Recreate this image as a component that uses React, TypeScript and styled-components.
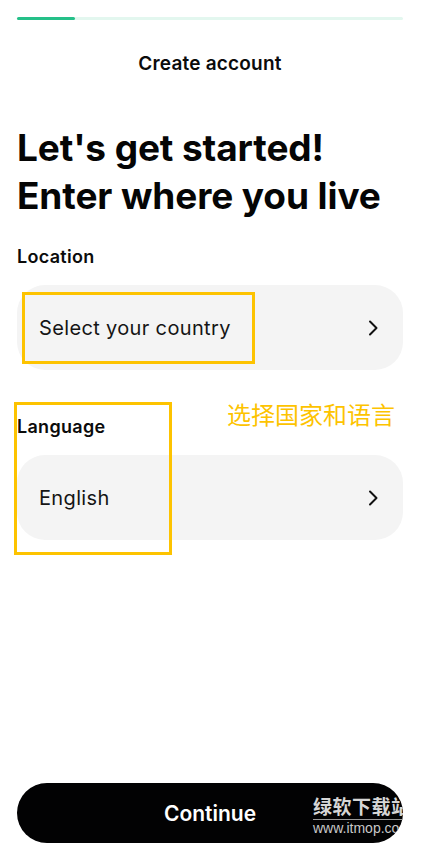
import React from "react";
import styled, { createGlobalStyle } from "styled-components";

const Global = createGlobalStyle`
  html, body { margin: 0; padding: 0; background: #ffffff; }
  body { font-family: Inter, "Noto Sans", "Liberation Sans", sans-serif; color: #0b0b0b; }
  * { box-sizing: border-box; }
`;

const Page = styled.div`
  min-height: 100vh;
  display: flex;
  flex-direction: column;
  padding: 17px 18px 11px 17px;
`;

const Progress = styled.div`
  height: 3px;
  border-radius: 2px;
  background: #e3f7ef;
  display: flex;
`;

const ProgressFill = styled.div`
  height: 100%;
  border-radius: 2px;
  background: #25c089;
`;

const TopTitle = styled.div`
  margin-top: 32px;
  text-align: center;
  font-size: 19px;
  line-height: 24px;
  font-weight: 600;
  letter-spacing: 0.2px;
`;

const Heading = styled.h1`
  margin: 48px 0 0;
  font-size: 37px;
  line-height: 48px;
  font-weight: 700;
  letter-spacing: -0.1px;
  color: #050505;
`;

const Section = styled.div<{ $gap: number }>`
  position: relative;
  margin-top: ${(p) => p.$gap}px;
  display: flex;
  flex-direction: column;
  gap: 16px;
`;

const Label = styled.div`
  font-size: 18px;
  line-height: 24px;
  font-weight: 600;
  letter-spacing: 0.3px;
`;

const Field = styled.button`
  position: relative;
  height: 85px;
  width: 100%;
  border: none;
  border-radius: 28px;
  background: #f4f4f4;
  display: flex;
  align-items: center;
  justify-content: space-between;
  padding: 0 24px 0 22px;
  font-family: inherit;
  font-size: 20px;
  letter-spacing: 0.35px;
  color: #151515;
  text-align: left;
`;

const Chevron = () => (
  <svg width="12" height="18" viewBox="0 0 12 18" fill="none">
    <path d="M3 2.5 L9.5 9 L3 15.5" stroke="#111" strokeWidth="2" strokeLinecap="round" strokeLinejoin="round" />
  </svg>
);

const Highlight = styled.div<{ $l: number; $t: number; $w: number; $h: number }>`
  position: absolute;
  left: ${(p) => p.$l}px;
  top: ${(p) => p.$t}px;
  width: ${(p) => p.$w}px;
  height: ${(p) => p.$h}px;
  border: 3px solid #fdc300;
  pointer-events: none;
`;

const Note = styled.div`
  position: absolute;
  left: 210px;
  top: -15px;
  font-family: "Noto Sans CJK SC", sans-serif;
  font-size: 24px;
  line-height: 28px;
  color: #fdc300;
`;

const Spacer = styled.div`
  flex: 1;
`;

const Continue = styled.button`
  position: relative;
  overflow: hidden;
  height: 60px;
  width: 100%;
  border: none;
  border-radius: 30px;
  background: #020203;
  color: #ffffff;
  font-family: inherit;
  font-size: 21px;
  font-weight: 600;
  display: flex;
  align-items: center;
  justify-content: center;
`;

const Watermark = styled.div`
  position: absolute;
  left: 296px;
  top: 12px;
  display: flex;
  flex-direction: column;
  color: #d6d6d6;
  white-space: nowrap;
  text-align: left;
`;

const WatermarkCn = styled.span`
  font-family: "Noto Sans CJK SC", sans-serif;
  font-size: 19px;
  line-height: 22px;
  font-weight: 700;
  letter-spacing: 0.5px;
  padding-bottom: 2px;
  border-bottom: 1px solid #9a9a9a;
`;

const WatermarkUrl = styled.span`
  font-family: "Liberation Sans", sans-serif;
  font-size: 14px;
  line-height: 16px;
  font-weight: 400;
  color: #c8c8c8;
`;

export default function App() {
  return (
    <>
      <Global />
      <Page>
        <Progress>
          <ProgressFill style={{ width: "15%" }} />
        </Progress>
        <TopTitle>Create account</TopTitle>
        <Heading>
          Let's get started!
          <br />
          Enter where you live
        </Heading>

        <Section $gap={25}>
          <Label>Location</Label>
          <Field>
            <span>Select your country</span>
            <Chevron />
            <Highlight $l={5} $t={7} $w={233} $h={72} />
          </Field>
        </Section>

        <Section $gap={45}>
          <Label>Language</Label>
          <Field>
            <span>English</span>
            <Chevron />
          </Field>
          <Note>选择国家和语言</Note>
          <Highlight $l={-3} $t={-13} $w={158} $h={153} />
        </Section>

        <Spacer />

        <Continue>
          Continue
          <Watermark>
            <WatermarkCn>绿软下载站</WatermarkCn>
            <WatermarkUrl>www.itmop.com</WatermarkUrl>
          </Watermark>
        </Continue>
      </Page>
    </>
  );
}
